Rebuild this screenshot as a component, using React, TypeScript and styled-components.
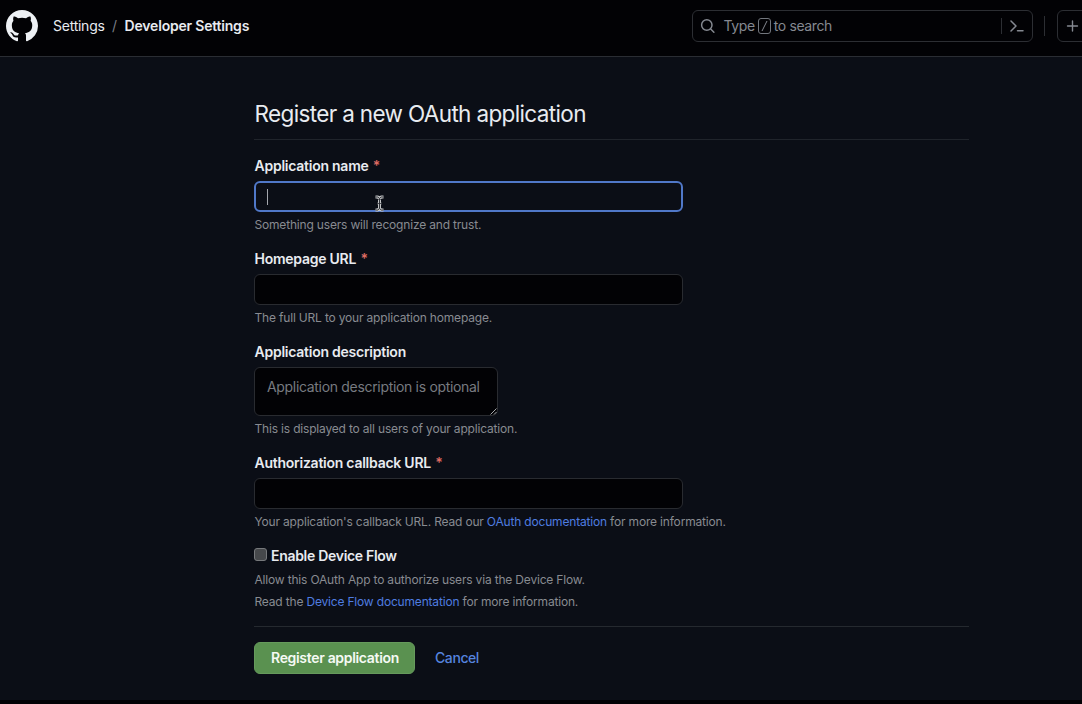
import React from 'react';
import styled, { createGlobalStyle } from 'styled-components';

const GlobalStyle = createGlobalStyle`
  * { box-sizing: border-box; }
  body {
    margin: 0;
    background: #0b0e16;
    color: #e8ebf0;
    font-family: Inter, "Liberation Sans", sans-serif;
    overflow: hidden;
  }
  input, textarea, button { font-family: inherit; }
`;

const Page = styled.div`
  height: 704px;
  overflow: hidden;
  display: flex;
  flex-direction: column;
  border-bottom: 4px solid #020205;
`;

const Header = styled.header`
  height: 57px;
  flex: none;
  display: flex;
  align-items: center;
  padding: 0 0 5px 6px;
  background: #020205;
  border-bottom: 1px solid #2a2d33;
`;

const Logo = styled.a`
  display: flex;
  width: 32px;
  height: 32px;
  margin-right: 15px;
  color: #eef1f5;
`;

const Breadcrumb = styled.nav`
  display: flex;
  align-items: center;
  flex: 1;
  font-size: 14px;
  line-height: 20px;
  white-space: nowrap;
`;

const Crumb = styled.span<{ $current?: boolean }>`
  font-weight: ${(p) => (p.$current ? 600 : 400)};
  letter-spacing: ${(p) => (p.$current ? '-0.2px' : '-0.25px')};
`;

const Slash = styled.span`
  width: 20px;
  text-align: center;
  color: #7a7e86;
`;

const SearchBox = styled.div`
  display: flex;
  align-items: center;
  width: 341px;
  height: 32px;
  padding: 0 7px 0 7px;
  border: 1px solid #2c2e33;
  border-radius: 6px;
  color: #858991;
  font-size: 14px;
  line-height: 20px;
`;

const SearchText = styled.span`
  display: flex;
  align-items: center;
  flex: 1;
  margin-left: 7.5px;
  letter-spacing: -0.38px;
`;

const SlashKey = styled.kbd`
  display: flex;
  width: 13px;
  height: 16px;
  margin: 0 3px 0 3px;
  border: 1px solid #72767d;
  border-radius: 3px;
`;

const Divider = styled.span<{ $height: number }>`
  width: 1px;
  height: ${(p) => p.$height}px;
  background: #2c2e33;
`;

const PromptIcon = styled.svg`
  margin-left: 7px;
`;

const CreateButton = styled.button`
  display: flex;
  align-items: center;
  flex: none;
  width: 40px;
  height: 32px;
  margin: 0 -15px 0 12px;
  padding: 0 7px;
  background: none;
  border: 1px solid #2c2e33;
  border-radius: 6px;
  color: #858991;
`;

const SearchGroup = styled.div`
  display: flex;
  align-items: center;
  gap: 11px;
`;

const Content = styled.main`
  width: 715px;
  margin-left: 254px;
  padding-top: 41px;
`;

const Title = styled.h1`
  height: 42px;
  margin: 0 0 16px;
  padding-left: 0.5px;
  border-bottom: 1px solid #20242b;
  font-size: 22.5px;
  font-weight: 400;
  line-height: 32px;
  letter-spacing: -0.64px;
  white-space: nowrap;
`;

const Field = styled.div<{ $height: number }>`
  display: flex;
  flex-direction: column;
  height: ${(p) => p.$height}px;
`;

const Label = styled.label`
  height: 25px;
  padding-left: 0.5px;
  font-size: 14px;
  font-weight: 600;
  line-height: 20px;
  letter-spacing: -0.25px;
  white-space: nowrap;
`;

const Required = styled.span`
  margin-left: 1px;
  color: #dd6a62;
`;

const InputWrap = styled.div`
  position: relative;
  width: 429px;
  height: 31px;
`;

const TextInput = styled.input<{ $active?: boolean }>`
  display: block;
  width: 429px;
  height: 31px;
  padding: 0 12px;
  outline: none;
  border: ${(p) => (p.$active ? '2px solid #5078c8' : '1px solid #292b30')};
  border-radius: 6px;
  background: ${(p) => (p.$active ? '#0b0e16' : '#020205')};
  color: #e8ebf0;
  font-size: 14px;
`;

const Caret = styled.span`
  position: absolute;
  left: 13px;
  top: 8px;
  width: 1px;
  height: 16px;
  background: #a4a7ad;
`;

const Pointer = styled.svg`
  position: absolute;
  left: 120px;
  top: 14px;
`;

const AreaWrap = styled.div`
  position: relative;
  width: 244px;
  height: 49px;
`;

const TextArea = styled.textarea`
  display: block;
  width: 244px;
  height: 49px;
  padding: 9px 4px 9px 12px;
  overflow: hidden;
  resize: none;
  outline: none;
  border: 1px solid #292b30;
  border-radius: 6px;
  background: #020205;
  font-size: 14px;
  line-height: 20px;
  letter-spacing: -0.32px;
  &::placeholder { color: #777a80; }
`;

const Grip = styled.svg`
  position: absolute;
  right: 0;
  bottom: 0;
`;

const Note = styled.p`
  margin: 0;
  padding: 3px 0 0 0.5px;
  color: #888b91;
  font-size: 12px;
  line-height: 20px;
  letter-spacing: -0.18px;
  white-space: nowrap;
`;

const DeviceNotes = styled.div`
  display: grid;
  grid-auto-rows: 22px;
  padding-top: 3px;
`;

const Link = styled.a`
  color: #4f7de0;
`;

const CheckRow = styled.label`
  display: flex;
  align-items: center;
  height: 18px;
  font-size: 14px;
  font-weight: 600;
  letter-spacing: -0.3px;
`;

const Checkbox = styled.span`
  width: 13px;
  height: 13px;
  margin: 0 4px 2px 0;
  border: 1px solid #77797c;
  border-radius: 3px;
  background: #46484b;
`;

const Actions = styled.div`
  display: flex;
  align-items: center;
  padding-top: 15px;
  border-top: 1px solid #25292f;
`;

const SubmitButton = styled.button`
  width: 161px;
  height: 32px;
  padding: 0 0 1px 1px;
  border: 1px solid #669a5c;
  border-radius: 6px;
  background: #5a9150;
  color: #f5faf4;
  font-size: 14px;
  font-weight: 600;
  letter-spacing: -0.32px;
`;

const CancelLink = styled.a`
  margin-left: 20px;
  padding-bottom: 1px;
  color: #5583de;
  font-size: 14px;
  font-weight: 500;
  letter-spacing: -0.42px;
`;

export default function App() {
  return (
    <Page>
      <GlobalStyle />
      <Header>
        <Logo>
          <svg width="32" height="32" viewBox="0 0 16 16" fill="currentColor">
            <path d="M8 0C3.58 0 0 3.58 0 8c0 3.54 2.29 6.53 5.47 7.59.4.07.55-.17.55-.38 0-.19-.01-.82-.01-1.49-2.01.37-2.53-.49-2.69-.94-.09-.23-.48-.94-.82-1.13-.28-.15-.68-.52-.01-.53.63-.01 1.08.58 1.23.82.72 1.21 1.87.87 2.33.66.07-.52.28-.87.51-1.07-1.78-.2-3.64-.89-3.64-3.95 0-.87.31-1.59.82-2.15-.08-.2-.36-1.02.08-2.12 0 0 .67-.21 2.2.82.64-.18 1.32-.27 2-.27s1.36.09 2 .27c1.53-1.04 2.2-.82 2.2-.82.44 1.1.16 1.92.08 2.12.51.56.82 1.27.82 2.15 0 3.07-1.87 3.75-3.65 3.95.29.25.54.73.54 1.48 0 1.07-.01 1.93-.01 2.2 0 .21.15.46.55.38A8.01 8.01 0 0 0 16 8c0-4.42-3.58-8-8-8z" />
          </svg>
        </Logo>
        <Breadcrumb>
          <Crumb>Settings</Crumb>
          <Slash>/</Slash>
          <Crumb $current>Developer Settings</Crumb>
        </Breadcrumb>
        <SearchGroup>
          <SearchBox>
            <svg width="16" height="16" viewBox="0 0 16 16" fill="none" stroke="currentColor" strokeWidth="1.5" strokeLinecap="round">
              <circle cx="6.8" cy="7" r="5.2" />
              <path d="M10.7 11l3.2 3.2" />
            </svg>
            <SearchText>
              Type
              <SlashKey>
                <svg width="11" height="14" viewBox="0 0 11 14" fill="none" stroke="#858991"><path d="M3 12L8 2" /></svg>
              </SlashKey>
              to search
            </SearchText>
            <Divider $height={16} />
            <PromptIcon width="16" height="16" viewBox="0 0 16 16" fill="none" stroke="currentColor" strokeWidth="1.5" strokeLinecap="round" strokeLinejoin="round">
              <path d="M2 3l5 5-5 5M8.5 12.7h5.5" />
            </PromptIcon>
          </SearchBox>
          <Divider $height={20} />
        </SearchGroup>
        <CreateButton>
          <svg width="16" height="16" viewBox="0 0 16 16" fill="none" stroke="currentColor" strokeWidth="1.4" strokeLinecap="round">
            <path d="M7.5 3v10M2.5 8h10" />
          </svg>
        </CreateButton>
      </Header>
      <Content>
        <Title>Register a new OAuth application</Title>
        <Field $height={93}>
          <Label>Application name <Required>*</Required></Label>
          <InputWrap>
            <TextInput $active />
            <Caret />
            <Pointer width="11" height="17" viewBox="0 0 11 17" fill="none">
              <path d="M1.5 2h2.2l1.8 1.4L7.3 2h2.2M5.5 3.4v10.2M1.5 15h2.2l1.8-1.4L7.3 15h2.2M3.8 8.5h3.4" stroke="#c3c4c6" strokeWidth="3" />
              <path d="M1.5 2h2.2l1.8 1.4L7.3 2h2.2M5.5 3.4v10.2M1.5 15h2.2l1.8-1.4L7.3 15h2.2M4.2 8.5h2.6" stroke="#303238" strokeWidth="1" />
            </Pointer>
          </InputWrap>
          <Note>Something users will recognize and trust.</Note>
        </Field>
        <Field $height={93}>
          <Label>Homepage URL <Required>*</Required></Label>
          <TextInput />
          <Note>The full URL to your application homepage.</Note>
        </Field>
        <Field $height={111}>
          <Label>Application description</Label>
          <AreaWrap>
            <TextArea placeholder="Application description is optional" />
            <Grip width="9" height="9" viewBox="0 0 9 9" stroke="#a5a7aa" fill="none">
              <path d="M1.5 7.5l6-6M5 7.5L7.5 5" />
            </Grip>
          </AreaWrap>
          <Note>This is displayed to all users of your application.</Note>
        </Field>
        <Field $height={93}>
          <Label>Authorization callback URL <Required>*</Required></Label>
          <TextInput />
          <Note>Your application's callback URL. Read our <Link>OAuth documentation</Link> for more information.</Note>
        </Field>
        <Field $height={80}>
          <CheckRow><Checkbox />Enable Device Flow</CheckRow>
          <DeviceNotes>
            <Note>Allow this OAuth App to authorize users via the Device Flow.</Note>
            <Note>Read the <Link>Device Flow documentation</Link> for more information.</Note>
          </DeviceNotes>
        </Field>
        <Actions>
          <SubmitButton>Register application</SubmitButton>
          <CancelLink>Cancel</CancelLink>
        </Actions>
      </Content>
    </Page>
  );
}
